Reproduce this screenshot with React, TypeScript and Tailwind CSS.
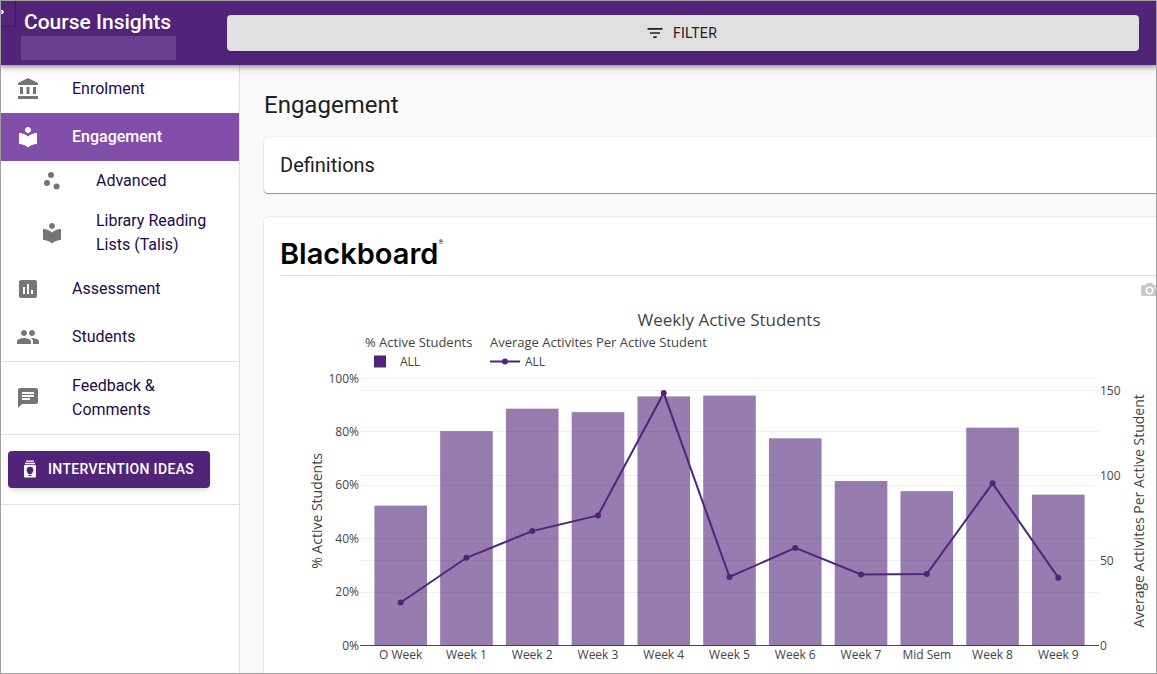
import type { ReactNode } from 'react';
import type { IconType } from 'react-icons';
import {
  MdAccountBalance,
  MdAssessment,
  MdChat,
  MdFilterList,
  MdLocalLibrary,
  MdPeople,
  MdScatterPlot
} from 'react-icons/md';

interface WeekStats {
  week: string;
  active: number;
  activities: number;
}

const weeks: WeekStats[] = [
  { week: 'O Week', active: 52.4, activities: 25.3 },
  { week: 'Week 1', active: 80.3, activities: 51.6 },
  { week: 'Week 2', active: 88.7, activities: 67.3 },
  { week: 'Week 3', active: 87.4, activities: 76.5 },
  { week: 'Week 4', active: 93.3, activities: 148.5 },
  { week: 'Week 5', active: 93.6, activities: 40.3 },
  { week: 'Week 6', active: 77.6, activities: 57.4 },
  { week: 'Week 7', active: 61.6, activities: 41.8 },
  { week: 'Mid Sem', active: 57.8, activities: 42 },
  { week: 'Week 8', active: 81.6, activities: 95.4 },
  { week: 'Week 9', active: 56.5, activities: 39.9 }
];

// Chart geometry, in viewBox units
const LEFT = 80;
const RIGHT = 819;
const BASE = 369.5;
const BAR = 52.6;

const xAt = (i: number) => 120.7 + i * 65.76;
const yPercent = (v: number) => BASE - v * 2.67;
const yCount = (v: number) => BASE - v * 1.7;

const WeeklyChart = () => {
  const points = weeks.map((w, i) => `${xAt(i)},${yCount(w.activities)}`).join(' ');

  return (
    <svg
      viewBox="0 0 877 398"
      className="block w-full h-auto font-['Open_Sans','Noto_Sans',sans-serif]"
      fill="#444"
      fontSize="12"
      role="img"
      aria-label="Weekly Active Students"
    >
      <text x="449" y="50" fontSize="17" textAnchor="middle">Weekly Active Students</text>

      {/* Legend */}
      <g fontSize="13">
        <text x="85" y="71">% Active Students</text>
        <text x="210" y="71">Average Activites Per Active Student</text>
      </g>
      <rect x="94" y="79.5" width="12" height="12" fill="#51247a" />
      <text x="120" y="90">ALL</text>
      <path d="M210 85.5h30" stroke="#51247a" strokeWidth="2" />
      <circle cx="225" cy="85.5" r="3" fill="#51247a" />
      <text x="245" y="90">ALL</text>

      {/* Left axis */}
      {[0, 20, 40, 60, 80, 100].map((v) => (
        <g key={v}>
          {v > 0 && (
            <line x1={LEFT} x2={RIGHT} y1={Math.floor(yPercent(v)) + 0.5} y2={Math.floor(yPercent(v)) + 0.5} stroke="#eee" />
          )}
          <text x="79" y={yPercent(v) + 4} textAnchor="end">{v}%</text>
        </g>
      ))}

      {/* Right axis */}
      {[0, 50, 100, 150].map((v) => (
        <g key={v}>
          {v > 0 && (
            <line x1={LEFT} x2={RIGHT} y1={Math.floor(yCount(v)) + 0.5} y2={Math.floor(yCount(v)) + 0.5} stroke="#eee" />
          )}
          <text x="820" y={yCount(v) + 4}>{v}</text>
        </g>
      ))}

      {weeks.map((w, i) => (
        <g key={w.week}>
          <rect
            x={xAt(i) - BAR / 2}
            y={yPercent(w.active)}
            width={BAR}
            height={BASE - yPercent(w.active)}
            fill="#51247a"
            fillOpacity="0.6"
          />
          <text x={xAt(i)} y="383" textAnchor="middle">{w.week}</text>
        </g>
      ))}

      <line x1={LEFT} x2={RIGHT} y1={BASE} y2={BASE} stroke="#444" />
      <polyline points={points} fill="none" stroke="#51247a" strokeWidth="2" />
      {weeks.map((w, i) => (
        <circle key={w.week} cx={xAt(i)} cy={yCount(w.activities)} r="3" fill="#51247a" />
      ))}

      <g fontSize="14" textAnchor="middle">
        <text transform="translate(42 235) rotate(-90)">% Active Students</text>
        <text transform="translate(864 235) rotate(-90)">Average Activites Per Active Student</text>
      </g>
    </svg>
  );
};

// Jar with a light bulb cut out of it
const JarIcon = () => (
  <svg viewBox="0 0 20 20" className="w-5 h-5" aria-hidden="true">
    <path d="M6 1.500h8v1.300H6zM5 3.800h10v1.400H5z" fill="#fff" />
    <path
      fill="#fff"
      fillRule="evenodd"
      d="M5 6h10a1 1 0 0 1 1 1v10.500a1 1 0 0 1-1 1H5a1 1 0 0 1-1-1V7a1 1 0 0 1 1-1zm5 1.800a3.400 3.400 0 0 0-3.400 3.400c0 1.600 1.200 2.300 1.700 3.800h3.400c.5-1.500 1.700-2.200 1.700-3.800A3.400 3.400 0 0 0 10 7.800zm-1.500 7.900v1.200h3v-1.200z"
    />
  </svg>
);

interface NavItemProps {
  icon: IconType;
  children: ReactNode;
  active?: boolean;
  nested?: boolean;
}

const NavItem = ({ icon: Icon, children, active, nested }: NavItemProps) => (
  <li>
    <a
      href="#"
      className={`flex items-center pr-4 text-base leading-6 ${nested ? 'gap-8 pl-10 py-2' : 'gap-8 pl-4 py-3'} ${
        active ? 'bg-[#814fa9] text-white font-medium' : 'text-[#1e0a4c]'
      }`}
    >
      <Icon className={`w-6 h-6 shrink-0 ${active ? 'text-white' : 'text-[#757575]'}`} />
      <span>{children}</span>
    </a>
  </li>
);

export default function App() {
  return (
    <div className="min-h-screen flex flex-col overflow-hidden bg-[#fafafa] font-[Roboto,sans-serif] text-[#212121]">
      {/* Window frame */}
      <div className="fixed inset-0 z-50 border border-[#a0a0a0] pointer-events-none" />

      <header className="relative z-10 flex h-[65px] bg-[#51247a] shadow-[0_2px_4px_rgba(0,0,0,0.3),0_4px_8px_rgba(0,0,0,0.15)]">
        <div className="absolute left-0 top-0 w-4 h-[27px] border-r border-b border-[#3d1a5e]">
          <svg viewBox="0 0 4 6" className="absolute left-0 top-[9px] w-1 h-1.5" aria-hidden="true">
            <path d="M1 1h1.500L4 3 2.500 5H1V4l1-1-1-1z" fill="#fff" />
          </svg>
        </div>
        <div className="w-[227px] shrink-0 pt-2 pl-6">
          <div className="text-[21px] leading-7 font-medium text-white">Course Insights</div>
          <div className="-ml-[3px] w-[155px] h-6 bg-[#6a4190]" />
        </div>
        <button className="flex-1 h-9 mt-[15px] mr-[18px] pr-1 flex items-center justify-center gap-2 rounded bg-[#e0e0e0] text-sm tracking-wide text-[#212121] shadow-md">
          <MdFilterList className="w-5 h-5" />
          FILTER
        </button>
      </header>

      <div className="flex flex-1">
        <nav className="w-60 shrink-0 bg-white border-r border-[#e0e0e0]">
          <ul>
            <NavItem icon={MdAccountBalance}>Enrolment</NavItem>
            <NavItem icon={MdLocalLibrary} active>Engagement</NavItem>
            <NavItem icon={MdScatterPlot} nested>Advanced</NavItem>
            <NavItem icon={MdLocalLibrary} nested>Library Reading Lists (Talis)</NavItem>
            <NavItem icon={MdAssessment}>Assessment</NavItem>
            <NavItem icon={MdPeople}>Students</NavItem>
          </ul>
          <ul className="border-y border-[#e0e0e0]">
            <NavItem icon={MdChat}>Feedback & Comments</NavItem>
          </ul>
          <div className="px-2 py-4 border-b border-[#e0e0e0]">
            <button className="flex items-center gap-2 h-[37px] pl-3 pr-4 pb-0.5 rounded bg-[#51247a] text-sm font-medium tracking-wide text-white whitespace-nowrap shadow-md">
              <JarIcon />
              INTERVENTION IDEAS
            </button>
          </div>
        </nav>

        <main className="flex-1 min-w-0 flex flex-col pl-6 pt-6">
          <h1 className="text-2xl leading-8">Engagement</h1>

          <section className="mt-4 h-14 px-4 flex items-center rounded-l bg-white shadow-[0_1px_1px_rgba(0,0,0,0.4),0_0_2px_rgba(0,0,0,0.12)]">
            <h2 className="text-xl leading-7">Definitions</h2>
          </section>

          <section className="relative flex-1 mt-6 pl-4 pt-4 rounded-tl overflow-hidden bg-white shadow-[0_0_2px_rgba(0,0,0,0.2)]">
            <div className="h-[43px] border-b border-[#e0e0e0] flex items-center text-black">
              <span className="font-[Inter,sans-serif] text-[29px] leading-10 font-semibold">Blackboard</span>
              <span className="self-start mt-1 text-[6px]">®</span>
            </div>
            <button aria-label="Download plot as png" className="absolute -right-1 top-[65px] text-[#c8c8c8]">
              <svg viewBox="0 0 20 16" className="w-5 h-4" fill="currentColor">
                <path
                  fillRule="evenodd"
                  d="M6 1h5l1.500 2H17a2 2 0 0 1 2 2v7a2 2 0 0 1-2 2H2a2 2 0 0 1-2-2V5a2 2 0 0 1 2-2h2.500zM8.500 4.500a4 4 0 1 0 0 8 4 4 0 0 0 0-8zm0 1.600a2.400 2.400 0 1 1 0 4.800 2.400 2.400 0 0 1 0-4.800zM13.500 5v1.500H15V5z"
                />
              </svg>
            </button>
            <WeeklyChart />
          </section>
        </main>
      </div>
    </div>
  );
}
